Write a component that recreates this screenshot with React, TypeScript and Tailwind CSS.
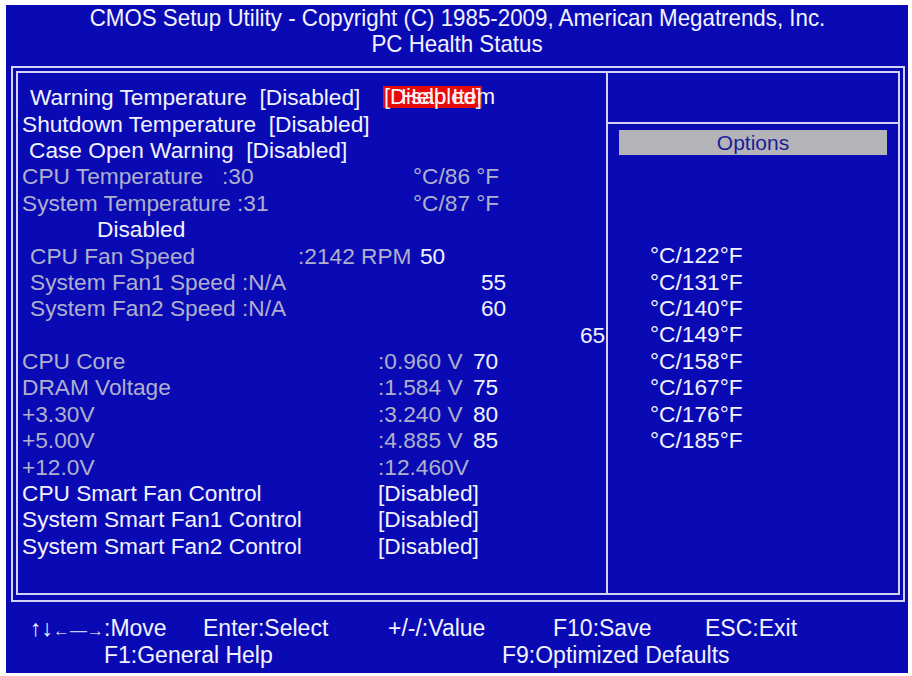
import React from "react";

const font = "font-['Liberation_Sans',Arial,sans-serif]";

const voltages: [string, string, string][] = [
  ["CPU Core", ":0.960 V", "70"],
  ["DRAM Voltage", ":1.584 V", "75"],
  ["+3.30V", ":3.240 V", "80"],
  ["+5.00V", ":4.885 V", "85"],
  ["+12.0V", ":12.460V", ""],
];

const smartFans = [
  "CPU Smart Fan Control",
  "System Smart Fan1 Control",
  "System Smart Fan2 Control",
];

const tempTable = ["122", "131", "140", "149", "158", "167", "176", "185"];

function Row({ children, className = "" }: { children: React.ReactNode; className?: string }) {
  return <div className={`flex h-[26.4px] items-center whitespace-pre ${className}`}>{children}</div>;
}

export default function App() {
  return (
    <div className={`w-[912px] h-[676px] bg-white pt-[5px] pl-[6px] ${font}`}>
      <div className="w-[902px] h-[668px] bg-[#0a0ab4] text-[#f2f2ff] pl-[5px]">
        {/* header */}
        <div className="flex flex-col items-center pr-[5px] text-[24px] leading-[26px]">
          <div className="scale-x-[0.93]">CMOS Setup Utility - Copyright (C) 1985-2009, American Megatrends, Inc.</div>
          <div className="scale-x-[0.93]">PC Health Status</div>
        </div>

        {/* double frame */}
        <div className="mt-[9px] w-[894px] h-[536px] border-2 border-[#d2d3f6] p-[3px] pb-[5px]">
          <div className="flex h-full border-2 border-[#d2d3f6] text-[22.7px]">
            {/* left panel */}
            <div className="w-[590px] border-r-2 border-[#d2d3f6] pt-[11px]">
              <Row className="pl-[12px]">
                <span className="w-[353px]">Warning Temperature  [Disabled]</span>
                <span className="relative">
                  <span className="block w-[99px] h-[22px] bg-[#e60a0a] leading-[22px] pl-[1px] text-[22px]">[Disabled]</span>
                  <span className="absolute left-[18px] top-0 leading-[22px] text-[22px] text-[#fff0f0]">Help Item</span>
                </span>
              </Row>
              <Row className="pl-[4px]">Shutdown Temperature  [Disabled]</Row>
              <Row className="pl-[11px]">Case Open Warning  [Disabled]</Row>
              <Row className="pl-[4px] text-[#aeb0cc]">
                <span className="w-[200px]">CPU Temperature</span>
                <span className="w-[191px]">:30</span>
                <span>°C/86 °F</span>
              </Row>
              <Row className="pl-[4px] text-[#aeb0cc]">
                <span className="w-[215px]">System Temperature</span>
                <span className="w-[176px]">:31</span>
                <span>°C/87 °F</span>
              </Row>
              <Row className="pl-[79px]">Disabled</Row>
              <Row className="pl-[12px] text-[#aeb0cc]">
                <span className="w-[268px]">CPU Fan Speed</span>
                <span className="w-[122px]">:2142 RPM</span>
                <span className="text-[#f2f2ff]">50</span>
              </Row>
              <Row className="pl-[12px] text-[#aeb0cc]">
                <span className="w-[212px]">System Fan1 Speed</span>
                <span className="w-[239px]">:N/A</span>
                <span className="text-[#f2f2ff]">55</span>
              </Row>
              <Row className="pl-[12px] text-[#aeb0cc]">
                <span className="w-[212px]">System Fan2 Speed</span>
                <span className="w-[239px]">:N/A</span>
                <span className="text-[#f2f2ff]">60</span>
              </Row>
              <Row className="pl-[562px]">65</Row>
              {voltages.map(([label, value, num]) => (
                <Row key={label} className="pl-[4px] text-[#aeb0cc]">
                  <span className="w-[356px]">{label}</span>
                  <span className="w-[95px]">{value}</span>
                  <span className="text-[#f2f2ff]">{num}</span>
                </Row>
              ))}
              {smartFans.map((label) => (
                <Row key={label} className="pl-[4px]">
                  <span className="w-[356px]">{label}</span>
                  <span>[Disabled]</span>
                </Row>
              ))}
            </div>

            {/* right panel */}
            <div className="flex-1">
              <div className="h-[51px] border-b-2 border-[#d2d3f6]" />
              <div className="mt-[6px] ml-[11px] w-[268px] h-[25px] bg-[#b4b4b8] text-[#1c1c98] text-[21px] leading-[25px] text-center">
                Options
              </div>
              <div className="mt-[87px] pl-[42px]">
                {tempTable.map((f) => (
                  <Row key={f}>°C/{f}°F</Row>
                ))}
              </div>
            </div>
          </div>
        </div>

        {/* footer */}
        <div className="pt-[14px] text-[23px] leading-[24px]">
          <div className="flex whitespace-pre pl-[19px]">
            <span className="w-[173px]">
              ↑↓<span className="text-[17px] text-[#c8c8f0]">←—→</span>:Move
            </span>
            <span className="w-[185px]">Enter:Select</span>
            <span className="w-[165px]">+/-/:Value</span>
            <span className="w-[152px]">F10:Save</span>
            <span>ESC:Exit</span>
          </div>
          <div className="flex whitespace-pre pl-[93px]">
            <span className="w-[398px]">F1:General Help</span>
            <span>F9:Optimized Defaults</span>
          </div>
        </div>
      </div>
    </div>
  );
}
